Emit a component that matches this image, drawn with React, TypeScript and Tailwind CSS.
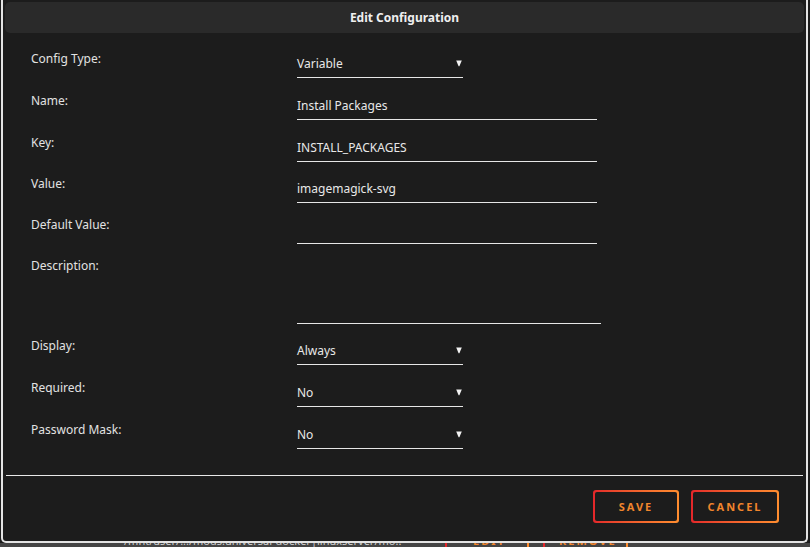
import React from "react";

type Field =
  | { label: string; kind: "select"; value: string }
  | { label: string; kind: "text"; value: string }
  | { label: string; kind: "area"; value: string };

const fields: { f: Field; h: string }[] = [
  { f: { label: "Config Type:", kind: "select", value: "Variable" }, h: "h-[42px]" },
  { f: { label: "Name:", kind: "text", value: "Install Packages" }, h: "h-[42px]" },
  { f: { label: "Key:", kind: "text", value: "INSTALL_PACKAGES" }, h: "h-[41px]" },
  { f: { label: "Value:", kind: "text", value: "imagemagick-svg" }, h: "h-[41px]" },
  { f: { label: "Default Value:", kind: "text", value: "" }, h: "h-[41px]" },
  { f: { label: "Description:", kind: "area", value: "" }, h: "h-[80px]" },
  { f: { label: "Display:", kind: "select", value: "Always" }, h: "h-[42px]" },
  { f: { label: "Required:", kind: "select", value: "No" }, h: "h-[42px]" },
  { f: { label: "Password Mask:", kind: "select", value: "No" }, h: "h-[42px]" },
];

function Caret() {
  return (
    <svg width="6" height="7" viewBox="0 0 6 7" className="absolute right-[1px] top-[10px]">
      <path d="M0.2 0.5 H5.8 L3.4 6.2 H2.6 Z" fill="#f2f2f2" />
    </svg>
  );
}

function Input({ f }: { f: Field }) {
  if (f.kind === "select") {
    return (
      <div className="relative w-[166px] h-[28px] pt-[6px] border-b border-[#e6e6e6] leading-[16px]">
        {f.value}
        <Caret />
      </div>
    );
  }
  if (f.kind === "area") {
    return <div className="w-[304px] h-[67px] border-b border-[#e6e6e6]" />;
  }
  return (
    <div className="w-[300px] h-[28px] pt-[6px] border-b border-[#e6e6e6] leading-[16px]">
      {f.value}
    </div>
  );
}

function GradButton({ label, w }: { label: string; w: string }) {
  return (
    <div className={`${w} h-[33px] p-[2px] rounded-[3px] bg-gradient-to-r from-[#e3262a] to-[#ff8d2f]`}>
      <div className="w-full h-full rounded-[2px] bg-[#1c1c1c] flex items-center justify-center pt-[1px] text-[11px] font-bold tracking-[2px] text-[#f2852c]">
        {label}
      </div>
    </div>
  );
}

export default function App() {
  return (
    <div
      className="w-[810px] h-[547px] overflow-hidden bg-[#1c1c1c] flex flex-col text-[12px] text-[#e8e8e8]"
      style={{ fontFamily: '"Noto Sans", "Open Sans", sans-serif' }}
    >
      <div className="ml-[1px] w-[807px] h-[543px] shrink-0 border-x-2 border-b-2 border-[#e4e4e4] rounded-b-[5px] bg-[#1c1c1c] flex flex-col px-[2px] pt-[2px]">
        <div className="h-[31px] shrink-0 rounded-[5px] bg-[#2a2a2a] flex items-center justify-center font-bold text-[12px] text-[#efefef]">
          Edit Configuration
        </div>

        <div className="pt-[17px] flex flex-col">
          {fields.map(({ f, h }) => (
            <div key={f.label} className={`${h} flex items-start`}>
              <div className="w-[292px] pl-[26px] pt-[1px] leading-[16px] text-[#e2e2e2]">{f.label}</div>
              <Input f={f} />
            </div>
          ))}
        </div>

        <div className="mt-auto mx-[1px] h-[1px] shrink-0 bg-[#e8e8e8]" />
        <div className="h-[65px] shrink-0 pt-[14px] pr-[25px] flex justify-end items-start gap-[12px]">
          <GradButton label="SAVE" w="w-[86px]" />
          <GradButton label="CANCEL" w="w-[88px]" />
        </div>
      </div>

      <div className="relative h-[4px] bg-[#454545] overflow-hidden">
        <div className="absolute left-[124px] top-[-8px] text-[11px] leading-[12px] text-[#cfcfcf]">
          /mnt/user/.../mods:universal-docker|linuxserver/mo..
        </div>
        <div className="absolute left-[445px] top-0 w-[84px] h-[4px] border-x-2 border-l-[#e3262a] border-r-[#ff8d2f]" />
        <div className="absolute left-[473px] top-[-8px] text-[11px] leading-[12px] font-bold tracking-[2px] text-[#f2852c]">EDIT</div>
        <div className="absolute left-[543px] top-0 w-[85px] h-[4px] border-x-2 border-l-[#e3262a] border-r-[#ff8d2f]" />
        <div className="absolute left-[559px] top-[-8px] text-[11px] leading-[12px] font-bold tracking-[2px] text-[#f2852c]">REMOVE</div>
      </div>
    </div>
  );
}
